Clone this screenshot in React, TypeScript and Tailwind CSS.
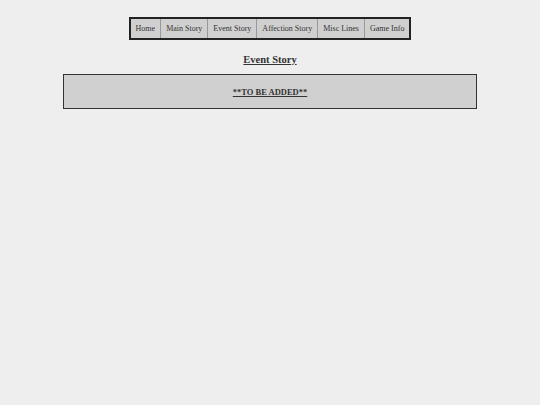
const navItems = ["Home", "Main Story", "Event Story", "Affection Story", "Misc Lines", "Game Info"];

export default function App() {
  return (
    <div className="min-h-[405px] bg-[#eeeeee] pt-[17px] font-['Liberation_Serif',serif] text-[#333333]">
      <div className="flex justify-center">
        <nav className="flex border-2 border-[#222222] bg-[#d0d0d0]">
          {navItems.map((item, i) => (
            <a
              key={item}
              href="#"
              className={
                "flex h-[19px] items-center px-[5px] text-[8px] text-[#333333] " +
                (i < navItems.length - 1 ? "border-r border-[#999999]" : "")
              }
            >
              {item}
            </a>
          ))}
        </nav>
      </div>
      <h2 className="mt-[12px] text-center text-[10.5px] font-bold underline">Event Story</h2>
      <div className="mx-[63px] mt-[6px] flex h-[35px] items-center justify-center border border-[#333333] bg-[#d0d0d0] pt-[3px]">
        <span className="text-[8.5px] font-bold underline">**TO BE ADDED**</span>
      </div>
    </div>
  );
}
